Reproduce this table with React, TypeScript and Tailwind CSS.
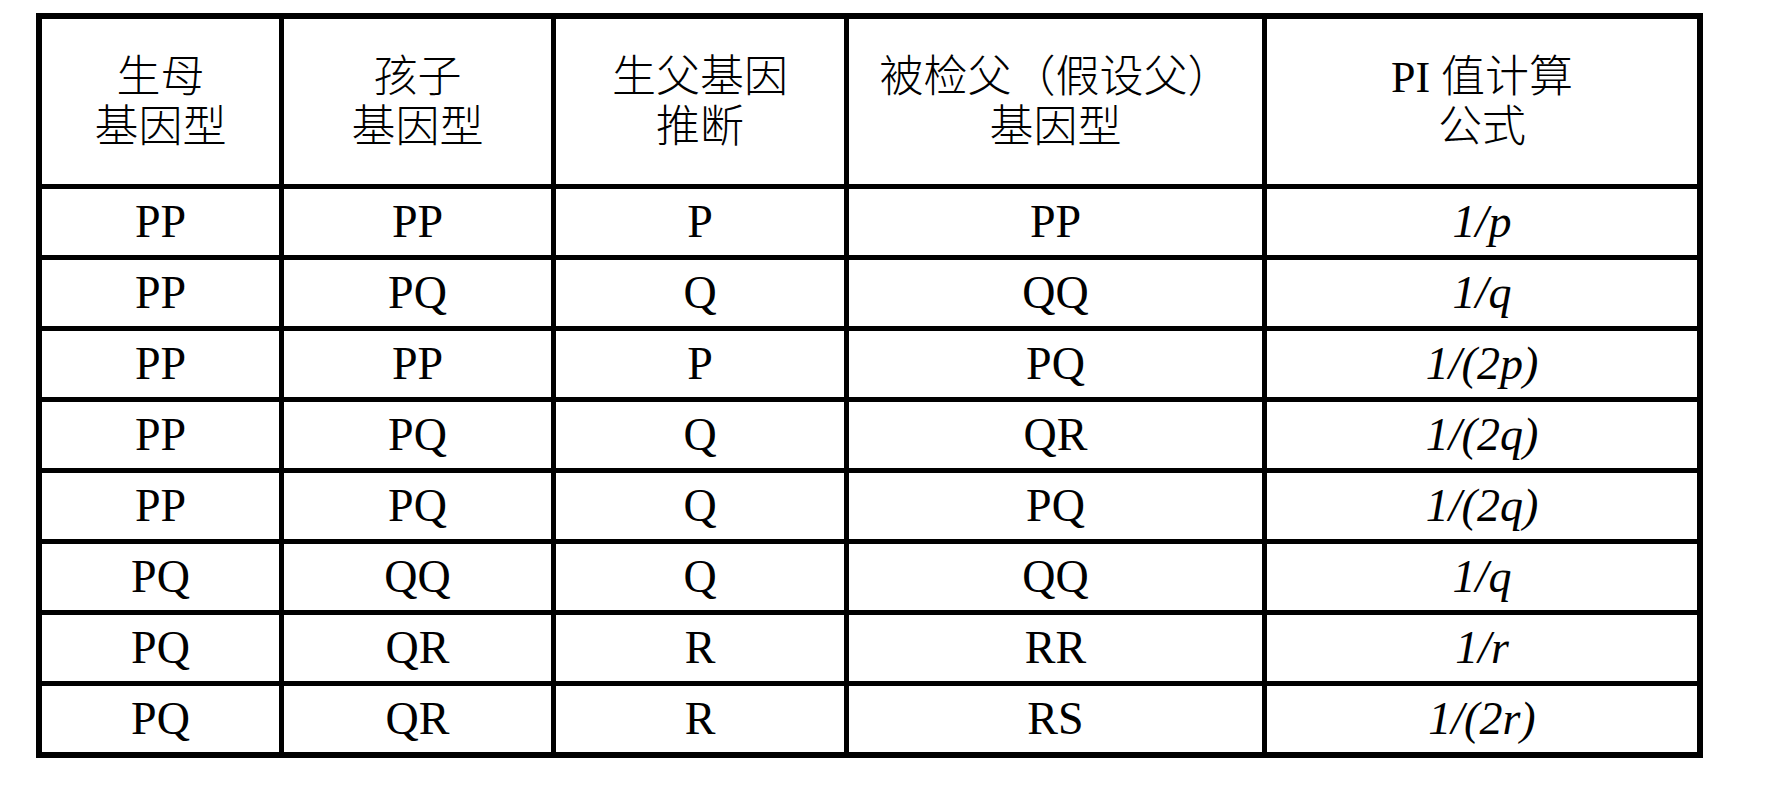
const HEAD = [
  ['生母', '基因型'],
  ['孩子', '基因型'],
  ['生父基因', '推断'],
  ['被检父（假设父）', '基因型'],
  ['PI 值计算', '公式'],
];

const ROWS: [string, string, string, string, string][] = [
  ['PP', 'PP', 'P', 'PP', '1/p'],
  ['PP', 'PQ', 'Q', 'QQ', '1/q'],
  ['PP', 'PP', 'P', 'PQ', '1/(2p)'],
  ['PP', 'PQ', 'Q', 'QR', '1/(2q)'],
  ['PP', 'PQ', 'Q', 'PQ', '1/(2q)'],
  ['PQ', 'QQ', 'Q', 'QQ', '1/q'],
  ['PQ', 'QR', 'R', 'RR', '1/r'],
  ['PQ', 'QR', 'R', 'RS', '1/(2r)'],
];

export default function App() {
  return (
    <div
      className="w-[1777px] h-[810px] bg-white pl-[36px] pt-[13px] text-black"
      style={{ fontFamily: '"Liberation Serif", "Noto Sans CJK SC", serif' }}
    >
      <div className="grid w-[1667px] grid-cols-[237px_267px_288px_413px_430px] grid-rows-[165px_repeat(8,66px)] gap-[5px] bg-black p-[6px]">
        {HEAD.map((h, i) => (
          <div key={i} className="flex flex-col items-center justify-center bg-white pt-[2px] text-[44px] leading-[50px] font-light">
            <span>{h[0]}</span>
            <span>{h[1]}</span>
          </div>
        ))}
        {ROWS.map((r, ri) =>
          r.map((c, ci) => (
            <div
              key={`${ri}-${ci}`}
              className={`flex items-center justify-center bg-white text-[46px] leading-none ${ci === 4 ? 'italic' : ''}`}
            >
              {c}
            </div>
          ))
        )}
      </div>
    </div>
  );
}
